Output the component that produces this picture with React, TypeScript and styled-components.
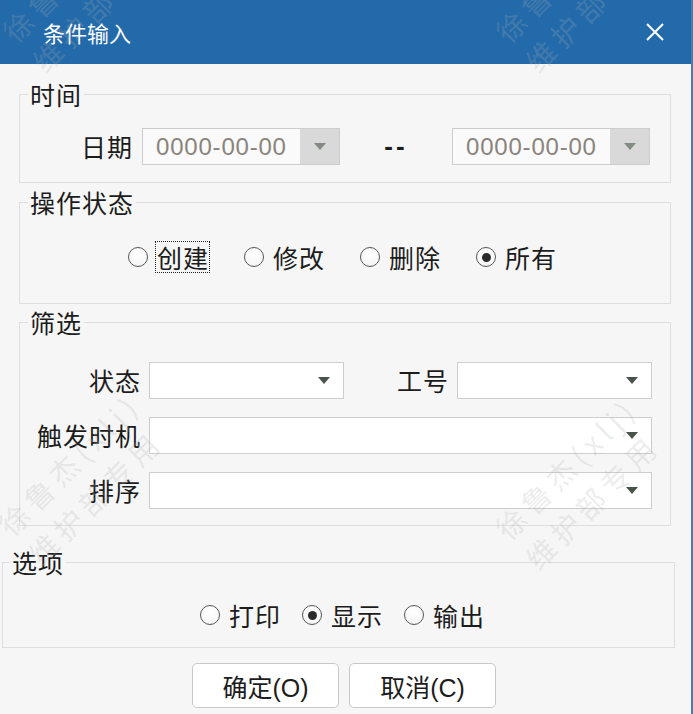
import React from "react";
import styled, { createGlobalStyle } from "styled-components";

const Global = createGlobalStyle`
  html, body { margin: 0; padding: 0; background: #f6f6f6; }
  body { font-family: "Liberation Sans", "Noto Sans CJK SC", sans-serif; }
  * { box-sizing: border-box; }
`;

const Window = styled.div`
  position: relative;
  width: 693px;
  height: 714px;
  overflow: hidden;
  background: #f6f6f6;
  border-right: 2px solid #4c7ca8;
  color: #1c1c1c;
  font-family: "Liberation Sans", "Noto Sans CJK SC", sans-serif;
`;

const TitleBar = styled.div`
  height: 64px;
  background: #236aab;
  display: flex;
  align-items: center;
  justify-content: space-between;
  padding: 0 26px 0 43px;
  color: #ffffff;
  font-size: 22px;
  font-family: "Noto Sans CJK SC", sans-serif;
`;

const CloseBtn = styled.span`
  display: flex;
  width: 20px;
  height: 20px;
`;

const Group = styled.fieldset<{ $ml: number; $mr: number; $mt: number; $pt: number; $pb: number }>`
  margin: ${(p) => p.$mt}px ${(p) => p.$mr}px 0 ${(p) => p.$ml}px;
  padding: ${(p) => p.$pt}px 0 ${(p) => p.$pb}px 0;
  border: 1px solid #dedede;
  min-width: 0;
`;

const Legend = styled.legend<{ $offset: number }>`
  margin-left: ${(p) => p.$offset}px;
  padding: 0 2px;
  font-family: "Noto Sans CJK SC", sans-serif;
  font-size: 25px;
  line-height: 24px;
  letter-spacing: 1px;
  color: #1c1c1c;
`;

const Row = styled.div`
  display: flex;
  align-items: center;
  height: 37px;
`;

const FieldLabel = styled.span<{ $w: number }>`
  width: ${(p) => p.$w}px;
  flex-shrink: 0;
  text-align: right;
  font-family: "Noto Sans CJK SC", sans-serif;
  font-size: 25px;
  line-height: 37px;
  letter-spacing: 1px;
  white-space: nowrap;
`;

const DateBox = styled.div<{ $ml?: number }>`
  display: flex;
  width: 198px;
  height: 37px;
  margin-left: ${(p) => p.$ml ?? 0}px;
  border: 1px solid #cdcdcd;
  background: #fafafa;
`;

const DateText = styled.span`
  flex: 1;
  padding-left: 13px;
  font-family: "Liberation Sans", sans-serif;
  font-size: 24px;
  letter-spacing: 0.8px;
  line-height: 35px;
  color: #8a847c;
`;

const DropBtn = styled.span`
  width: 39px;
  background: #d9d9d9;
  display: flex;
  align-items: center;
  justify-content: center;
`;

const Tri = styled.span<{ $color: string }>`
  width: 0;
  height: 0;
  border-left: 6px solid transparent;
  border-right: 6px solid transparent;
  border-top: 7px solid ${(p) => p.$color};
`;

const Dash = styled.span`
  width: 112px;
  text-align: center;
  font-family: "Liberation Sans", sans-serif;
  font-size: 26px;
  font-weight: 600;
  letter-spacing: 3px;
  line-height: 37px;
`;

const RadioRow = styled.div<{ $pl: number; $gap: number }>`
  display: flex;
  align-items: center;
  height: 32px;
  padding-left: ${(p) => p.$pl}px;
  gap: ${(p) => p.$gap}px;
`;

const RadioItem = styled.label`
  display: flex;
  align-items: center;
  gap: 7px;
`;

const RadioCircle = styled.span<{ $checked?: boolean }>`
  flex-shrink: 0;
  width: 20px;
  height: 20px;
  border-radius: 50%;
  border: 1.5px solid #575757;
  background: radial-gradient(circle at 50% 35%, #ffffff 0%, #f6f6f6 70%, #e2e2e2 100%);
  display: flex;
  align-items: center;
  justify-content: center;
  &::after {
    content: "";
    width: 9px;
    height: 9px;
    border-radius: 50%;
    background: ${(p) => (p.$checked ? "#2b2b2b" : "transparent")};
  }
`;

const RadioText = styled.span<{ $focus?: boolean }>`
  border: 1px dotted ${(p) => (p.$focus ? "#222" : "transparent")};
  padding: 0 0 0 1px;
  font-family: "Noto Sans CJK SC", sans-serif;
  font-size: 25px;
  line-height: 30px;
  letter-spacing: 1px;
  white-space: nowrap;
`;

const FilterGrid = styled.div`
  display: grid;
  grid-template-columns: 121px 195px 97px 195px;
  grid-auto-rows: 37px;
  column-gap: 8px;
  row-gap: 18px;
`;

const Select = styled.div<{ $span?: boolean }>`
  grid-column: ${(p) => (p.$span ? "2 / 5" : "auto")};
  height: 37px;
  border: 1px solid #cdcdcd;
  background: #ffffff;
  display: flex;
  align-items: center;
  justify-content: flex-end;
  padding-right: 13px;
`;

const ButtonRow = styled.div`
  display: flex;
  gap: 10px;
  margin-top: 15px;
  padding-left: 192px;
`;

const Button = styled.button`
  width: 147px;
  height: 45px;
  border: 1px solid #c9c9c9;
  border-radius: 5px;
  background: #ffffff;
  color: #1c1c1c;
  font-family: "Liberation Sans", "Noto Sans CJK SC", sans-serif;
  font-size: 25px;
  padding: 0;
  display: flex;
  align-items: center;
  justify-content: center;
`;

const Watermark = styled.div`
  position: absolute;
  transform-origin: 0 0;
  transform: rotate(-45deg);
  font-family: "Noto Sans CJK SC", sans-serif;
  font-size: 29px;
  line-height: 42px;
  letter-spacing: 6px;
  white-space: pre;
  color: rgba(175, 175, 175, 0.24);
  pointer-events: none;
`;

const marks = [
  { x: -8, y: 21 },
  { x: 485, y: 21 },
  { x: -12, y: 514 },
  { x: 485, y: 518 },
];

export default function App() {
  return (
    <>
      <Global />
      <Window>
        <TitleBar>
          <span>条件输入</span>
          <CloseBtn>
            <svg width="20" height="20" viewBox="0 0 20 20">
              <path d="M2 2 L18 18 M18 2 L2 18" stroke="#ffffff" strokeWidth="2" fill="none" />
            </svg>
          </CloseBtn>
        </TitleBar>

        <Group $ml={19} $mr={20} $mt={18} $pt={22} $pb={17}>
          <Legend $offset={8}>时间</Legend>
          <Row>
            <FieldLabel $w={113}>日期</FieldLabel>
            <DateBox $ml={9}>
              <DateText>0000-00-00</DateText>
              <DropBtn>
                <Tri $color="#838b83" />
              </DropBtn>
            </DateBox>
            <Dash>--</Dash>
            <DateBox>
              <DateText>0000-00-00</DateText>
              <DropBtn>
                <Tri $color="#838b83" />
              </DropBtn>
            </DateBox>
          </Row>
        </Group>

        <Group $ml={19} $mr={20} $mt={7} $pt={27} $pb={30}>
          <Legend $offset={8}>操作状态</Legend>
          <RadioRow $pl={108} $gap={34}>
            <RadioItem>
              <RadioCircle />
              <RadioText $focus>创建</RadioText>
            </RadioItem>
            <RadioItem>
              <RadioCircle />
              <RadioText>修改</RadioText>
            </RadioItem>
            <RadioItem>
              <RadioCircle />
              <RadioText>删除</RadioText>
            </RadioItem>
            <RadioItem>
              <RadioCircle $checked />
              <RadioText>所有</RadioText>
            </RadioItem>
          </RadioRow>
        </Group>

        <Group $ml={19} $mr={20} $mt={6} $pt={28} $pb={16}>
          <Legend $offset={8}>筛选</Legend>
          <FilterGrid>
            <FieldLabel $w={121}>状态</FieldLabel>
            <Select>
              <Tri $color="#48544a" />
            </Select>
            <FieldLabel $w={97}>工号</FieldLabel>
            <Select>
              <Tri $color="#48544a" />
            </Select>
            <FieldLabel $w={121}>触发时机</FieldLabel>
            <Select $span>
              <Tri $color="#48544a" />
            </Select>
            <FieldLabel $w={121}>排序</FieldLabel>
            <Select $span>
              <Tri $color="#48544a" />
            </Select>
          </FilterGrid>
        </Group>

        <Group $ml={2} $mr={16} $mt={24} $pt={25} $pb={16}>
          <Legend $offset={7}>选项</Legend>
          <RadioRow $pl={197} $gap={20}>
            <RadioItem>
              <RadioCircle />
              <RadioText>打印</RadioText>
            </RadioItem>
            <RadioItem>
              <RadioCircle $checked />
              <RadioText>显示</RadioText>
            </RadioItem>
            <RadioItem>
              <RadioCircle />
              <RadioText>输出</RadioText>
            </RadioItem>
          </RadioRow>
        </Group>

        <ButtonRow>
          <Button>确定(O)</Button>
          <Button>取消(C)</Button>
        </ButtonRow>

        {marks.map((m, i) => (
          <Watermark key={i} style={{ left: m.x, top: m.y }}>
            {"徐鲁杰(xlj)\n维护部专用"}
          </Watermark>
        ))}
      </Window>
    </>
  );
}
